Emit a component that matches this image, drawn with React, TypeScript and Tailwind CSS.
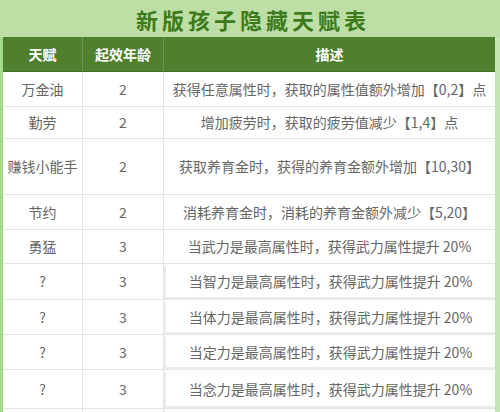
const rows = [
  { name: '万金油', age: '2', desc: '获得任意属性时，获取的属性值额外增加【0,2】点', h: 'h-[35px]', boxed: false },
  { name: '勤劳', age: '2', desc: '增加疲劳时，获取的疲劳值减少【1,4】点', h: 'h-[32px]', boxed: false },
  { name: '赚钱小能手', age: '2', desc: '获取养育金时，获得的养育金额外增加【10,30】', h: 'h-[56px]', boxed: false },
  { name: '节约', age: '2', desc: '消耗养育金时，消耗的养育金额外减少【5,20】', h: 'h-[35px]', boxed: false },
  { name: '勇猛', age: '3', desc: '当武力是最高属性时，获得武力属性提升 20%', h: 'h-[34px]', boxed: false },
  { name: '?', age: '3', desc: '当智力是最高属性时，获得武力属性提升 20%', h: 'h-[36px]', boxed: true },
  { name: '?', age: '3', desc: '当体力是最高属性时，获得武力属性提升 20%', h: 'h-[35px]', boxed: true },
  { name: '?', age: '3', desc: '当定力是最高属性时，获得武力属性提升 20%', h: 'h-[35px]', boxed: true },
  { name: '?', age: '3', desc: '当念力是最高属性时，获得武力属性提升 20%', h: 'h-[39px]', boxed: true },
  { name: '', age: '', desc: '', h: 'h-[20px]', boxed: true },
];

export default function App() {
  return (
    <div
      className="w-[500px] h-[412px] overflow-hidden bg-white"
      style={{ fontFamily: '"Noto Sans CJK SC", "Noto Sans", sans-serif' }}
    >
      {/* Title */}
      <div className="h-[37px] bg-[#bddfa6] flex items-center justify-center">
        <h1 className="text-[22px] font-bold tracking-[4px] text-[#3c7a1c] leading-none pl-[6px]">
          新版孩子隐藏天赋表
        </h1>
      </div>

      <div className="flex">
        <div className="w-[3px] shrink-0 bg-[#a5d98c]" />
        <div className="w-[492px] shrink-0">
          {/* Header */}
          <div className="flex h-[35px] bg-[#4f7f2f] border-b border-[#41702a] text-white text-[14px] font-bold">
            <div className="w-[80px] flex items-center justify-center border-r border-[#6b9650]">天赋</div>
            <div className="w-[81px] flex items-center justify-center border-r border-[#6b9650]">起效年龄</div>
            <div className="flex-1 flex items-center justify-center">描述</div>
          </div>

          {rows.map((r, i) => (
            <div key={i} className={`flex ${r.h} border-b border-[#e4e4e4] text-[14px] text-[#666666]`}>
              <div className="w-[80px] flex items-center justify-center border-r border-[#e4e4e4]">{r.name}</div>
              <div className="w-[81px] flex items-center justify-center border-r border-[#e4e4e4]">{r.age}</div>
              <div
                className={`flex-1 flex items-center justify-center ${
                  r.boxed ? 'border-l-2 border-b-2 border-[#ececec] mt-[2px]' : ''
                }`}
              >
                {r.desc}
              </div>
            </div>
          ))}
        </div>
        <div className="w-[5px] shrink-0 bg-[#c3e6b0]" />
      </div>
    </div>
  );
}
